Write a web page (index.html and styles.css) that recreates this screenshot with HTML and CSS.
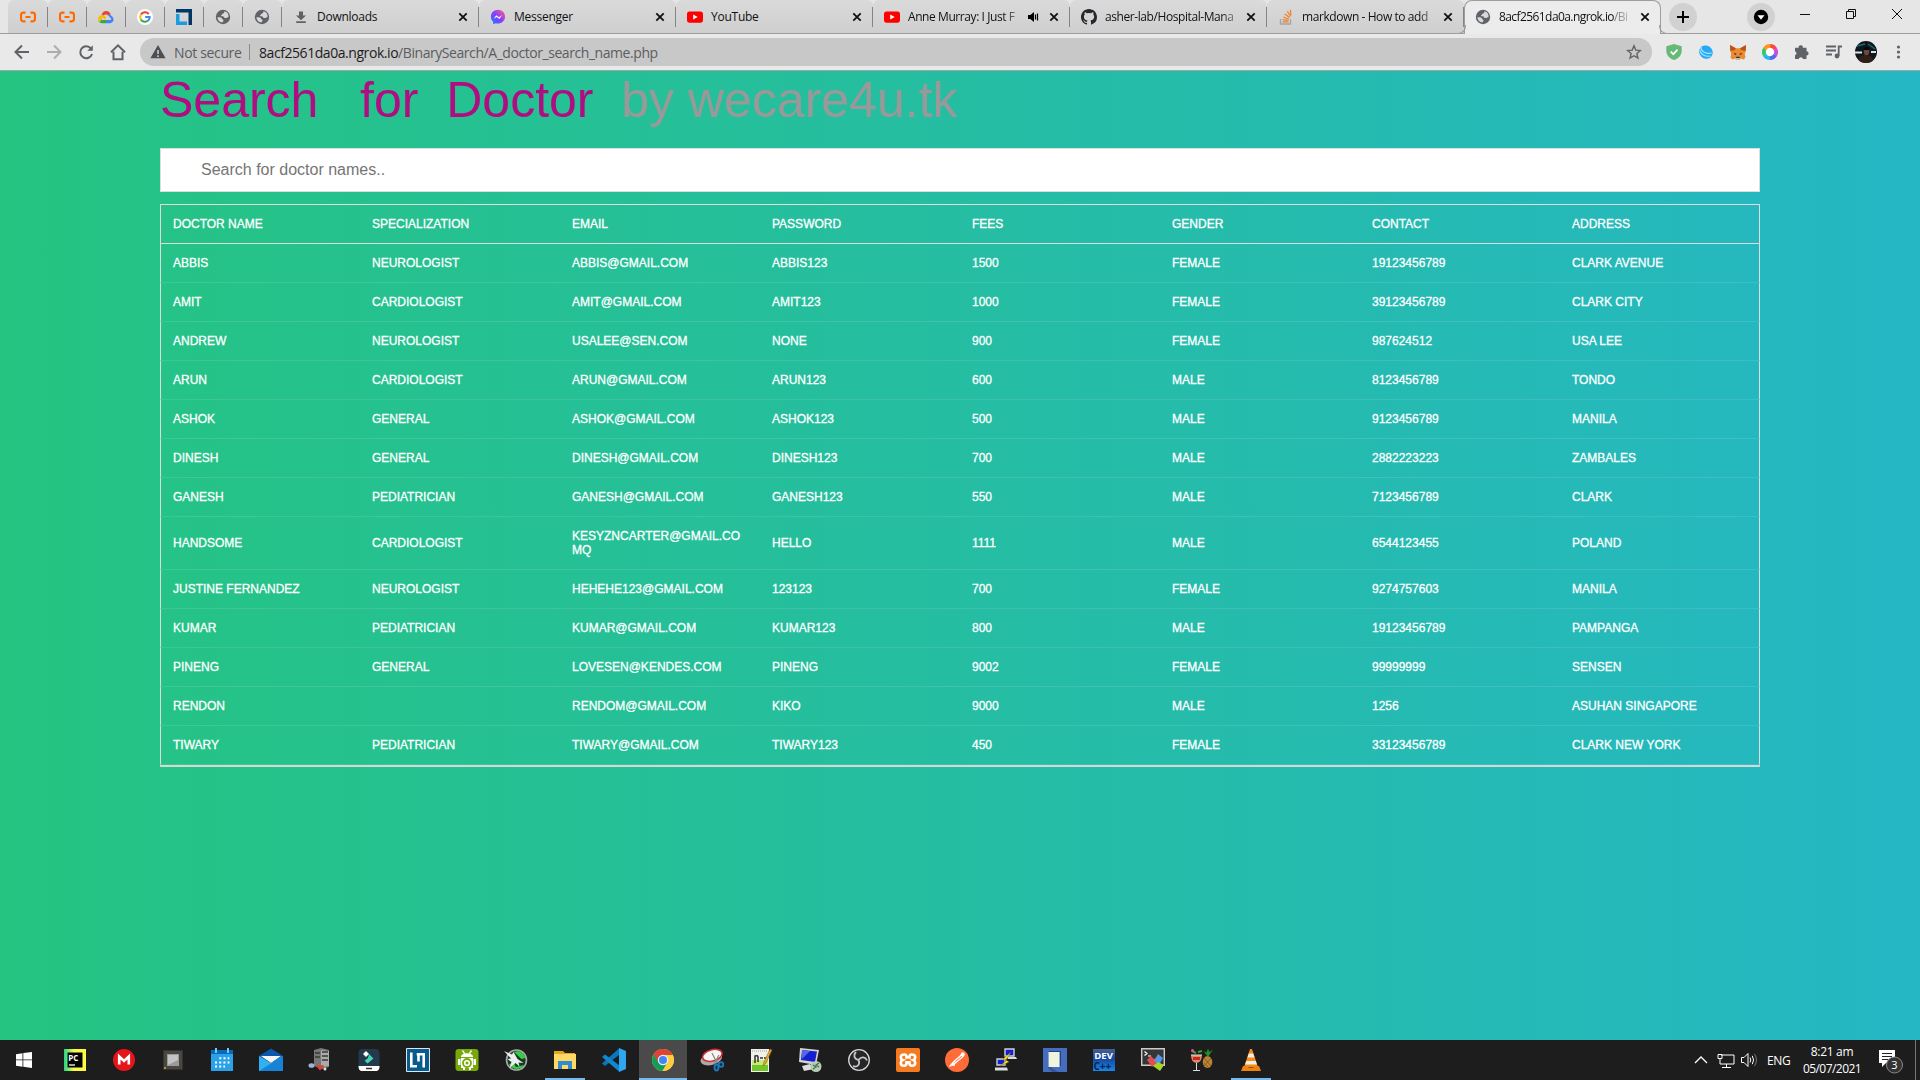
FILE: index.html
```html
<!DOCTYPE html>
<html lang="en">
<head>
<meta charset="utf-8">
<title>Search for Doctor</title>
<link rel="stylesheet" href="styles.css">
</head>
<body>
<svg class="defs" width="0" height="0">
  <symbol id="globe" viewBox="0 0 16 16"><circle cx="8" cy="8" r="7.200" fill="#5f6368"/><path d="M9.300 2.200c.3 1.400-.3 2-1.300 2.200-.9.200-.7 1.300-1.500 1.600-.8.300-.6 1.200.3 1.200 1.500-.1 2.500.5 2.600 1.800h1.800c1 0 1.300-.8 2.300-.7A5.600 5.600 0 0 0 9.300 2.200zM2.400 8.300c1.500-.4 4.300-.1 4.600 1.300.2 1.200 1.500.8 1.500 2 0 .9-.9 1-.9 2A5.700 5.700 0 0 1 2.400 8.300z" fill="#d8d8d8"/></symbol>
  <symbol id="close" viewBox="0 0 16 16"><path d="M4.300 4.300l7.400 7.400M11.700 4.300l-7.400 7.400" stroke="#111" stroke-width="1.800"/></symbol>
  <symbol id="cloud" viewBox="0 0 16 16"><path d="M5.500 3.700H3.300Q1 3.700 1 6v4Q1 12.300 3.300 12.300h2.200M10.500 3.700h2.200Q15 3.700 15 6v4q0 2.300-2.300 2.300h-2.200M5.500 8h5" fill="none" stroke="#ff6a00" stroke-width="2.200"/></symbol>
  <symbol id="tube" viewBox="0 0 16 16"><rect y="2.400" width="16" height="11.300" rx="2.600" fill="red"/><path d="M6.200 5.500v5L10.700 8z" fill="#fff"/></symbol>
</svg>

<header class="browser">
  <div class="tabs">
    <div class="tab pinned first"><svg class="fav"><use href="#cloud"/></svg></div>
    <div class="tab pinned"><svg class="fav"><use href="#cloud"/></svg></div>
    <div class="tab pinned"><svg class="fav" viewBox="0 0 16 16"><path d="M3.500 6.300C4.300 3.400 6 2 8 2c2.200 0 3.800 1.100 4.500 3L10.600 6.800C8.500 4.600 5.800 5.600 5.700 7z" fill="#ea4335"/><path d="M12.300 4.800c.2 1 .3 1.500 1.300 2.200C17 9.500 15.700 14.200 12 14.200H8v-3.100h4c1.500 0 1.600-2 .2-2.300L10.500 6.700z" fill="#4285f4"/><path d="M8 14.200H4.200c-2 0-3.200-1-3.700-2.500l2.600-1.400 1 .8H8z" fill="#34a853"/><path d="M1.800 13.200C-1.300 10.500.2 6 4.200 6c2 0 3.800 1.300 4 3.200L6.400 10.600C5.600 8.500 3 8.700 3.500 10.800z" fill="#fbbc05"/></svg></div>
    <div class="tab pinned"><svg class="fav" viewBox="0 0 16 16"><circle cx="8" cy="8" r="8" fill="#fff"/><path d="M11.700 5A4.800 4.800 0 0 0 3.900 5.600" fill="none" stroke="#ea4335" stroke-width="2"/><path d="M3.900 5.600a4.800 4.800 0 0 0 0 4.800" fill="none" stroke="#fbbc05" stroke-width="2"/><path d="M3.900 10.400a4.800 4.800 0 0 0 7.300 1.200" fill="none" stroke="#34a853" stroke-width="2"/><path d="M11.200 11.600A4.600 4.600 0 0 0 12.700 8H8.200" fill="none" stroke="#4285f4" stroke-width="2"/></svg></div>
    <div class="tab pinned"><svg class="fav" viewBox="0 0 16 16"><path d="M0 0h16v16h-3.500V3.500H0z" fill="#003764"/><path d="M0 5h3.500v7.500H11V16H0z" fill="#1b9be0"/></svg></div>
    <div class="tab pinned"><svg class="fav"><use href="#globe"/></svg></div>
    <div class="tab pinned"><svg class="fav"><use href="#globe"/></svg></div>
    <div class="tab"><svg class="fav" viewBox="0 0 16 16"><path d="M6 2.500h4v4h3L8 11.300 3 6.500h3zM3.200 12.300h9.600V14H3.200z" fill="#5f6368"/></svg><span class="title">Downloads</span><svg class="fav"><use href="#close"/></svg></div>
    <div class="tab"><svg class="fav" viewBox="0 0 16 16"><defs><linearGradient id="msg" x1="0" y1="1" x2="1" y2="0"><stop offset="0" stop-color="#08f"/><stop offset=".5" stop-color="#8a3cff"/><stop offset="1" stop-color="#ff6a70"/></linearGradient></defs><path d="M8 .8C3.800.8.900 3.800.900 7.700c0 2.200.9 3.900 2.300 5.100v2.500l2.400-1.100c5 1.200 9.500-1.900 9.500-6.500C15.100 3.700 12.200.8 8 .8z" fill="url(#msg)"/><path d="M3.700 9.800L6.300 6.300l2.600 2 3.200-2.200-2.700 3.800-2.600-2z" fill="#fff"/></svg><span class="title">Messenger</span><svg class="fav"><use href="#close"/></svg></div>
    <div class="tab"><svg class="fav"><use href="#tube"/></svg><span class="title">YouTube</span><svg class="fav"><use href="#close"/></svg></div>
    <div class="tab"><svg class="fav"><use href="#tube"/></svg><span class="title fade tight">Anne Murray: I Just F</span><svg class="sound" viewBox="0 0 16 16"><path d="M3 6h2.300L9 3v10L5.300 10H3z" fill="#000"/><path d="M10.500 5.500v5M12.500 4.500v7" stroke="#000" stroke-width="1.200"/></svg><svg class="fav"><use href="#close"/></svg></div>
    <div class="tab"><svg class="fav" viewBox="0 0 16 16"><path fill="#24292f" d="M8 0C3.580 0 0 3.580 0 8c0 3.540 2.290 6.530 5.470 7.590.4.070.55-.17.55-.38v-1.340c-2.230.48-2.700-1.070-2.700-1.070-.36-.93-.89-1.170-.89-1.170-.73-.5.050-.49.050-.49.810.060 1.230.83 1.230.83.710 1.230 1.880.87 2.330.66.070-.52.280-.87.510-1.070-1.780-.2-3.640-.89-3.640-3.950 0-.87.310-1.590.82-2.150-.08-.2-.36-1.020.080-2.120 0 0 .67-.22 2.200.82a7.600 7.600 0 0 1 4 0c1.530-1.040 2.200-.82 2.200-.82.440 1.100.160 1.920.080 2.120.510.56.820 1.270.820 2.150 0 3.070-1.870 3.750-3.650 3.950.290.250.54.73.54 1.480v2.200c0 .21.150.46.550.38A8 8 0 0 0 16 8c0-4.420-3.580-8-8-8z"/></svg><span class="title fade tight">asher-lab/Hospital-Mana</span><svg class="fav"><use href="#close"/></svg></div>
    <div class="tab"><svg class="fav" viewBox="0 0 16 16"><path d="M2.500 10v5h10v-5" fill="none" stroke="#9fa6ad" stroke-width="1.300"/><path d="M4.500 12.800h6M4.600 10.700l6 .6M5.200 8l5.700 2M6.700 5l5 3.600M9.300 2.300l3.500 5M12.300.8l.8 5" stroke="#f48024" stroke-width="1.200"/></svg><span class="title fade tight">markdown - How to add</span><svg class="fav"><use href="#close"/></svg></div>
    <div class="tab active"><svg class="fav"><use href="#globe"/></svg><span class="title fade tighter">8acf2561da0a.ngrok.io<i>/Bi</i></span><svg class="fav"><use href="#close"/></svg></div>
    <div class="round plus"><svg width="28" height="28"><path d="M8 14h12M14 8v12" stroke="#000" stroke-width="2"/></svg></div>
    <div class="round caret"><svg width="28" height="28"><circle cx="14" cy="14" r="7.200" fill="#000"/><path d="M10.500 12.200h7L14 16.800z" fill="#fff"/></svg></div>
    <svg class="window-buttons" width="136" height="28" viewBox="0 0 136 28"><path d="M15 14.500h10M61.500 11.500h7v7h-7zM63.500 11v-1.500h7v7H69M107 9l10 10M117 9l-10 10" fill="none" stroke="#111"/></svg>
  </div>

  <div class="toolbar">
    <svg class="nav" width="128" height="32" viewBox="0 0 128 32" fill="none" stroke="#5f6368" stroke-width="2"><path d="M29 16H16M22 9.500L15.500 16l6.500 6.500"/><path d="M47 16h13M54 9.500l6.500 6.500-6.500 6.500" stroke="#adadad"/><path d="M91 12.500a6 6 0 1 0 1 5.500"/><path d="M92.800 9.300v5.500h-5.500z" fill="#5f6368" stroke="none"/><path d="M113.500 15.800v7.500h9v-7.500M111 16.300L118 9.300l7 7"/></svg>
    <div class="address">
      <svg width="16" height="14" viewBox="0 0 16 14"><path d="M8 0l7.600 13.300H.4z" fill="#4b4e52"/><path d="M8 5v4M8 10.200V12" stroke="#ccc" stroke-width="1.600"/></svg>
      <span class="secure">Not secure</span><span class="bar"></span>
      <span class="url"><b>8acf2561da0a.ngrok.io</b>/BinarySearch/A_doctor_search_name.php</span>
      <svg class="star" width="16" height="16" viewBox="0 0 16 16"><path d="M8 1.800l1.800 4.300 4.600.4-3.500 3.100 1 4.500L8 11.700l-3.900 2.400 1-4.500L1.600 6.500l4.600-.4z" fill="none" stroke="#5f6368" stroke-width="1.400"/></svg>
    </div>
    <div class="extensions">
      <svg class="fav" viewBox="0 0 16 16"><path d="M8 0l7.700 2.200v4.500C15.700 11.500 12 14.500 8 16 4 14.500.3 11.500.3 6.700V2.200z" fill="#68b876"/><path d="M4.700 7.600l2.600 2.600 4.200-4.600" fill="none" stroke="#fff" stroke-width="1.700"/></svg>
      <svg class="fav" viewBox="0 0 16 16"><ellipse cx="8" cy="8.200" rx="7" ry="6.500" transform="rotate(35 8 8)" fill="#27a9f5"/><path d="M3 2.500c-1 3.500 3.500 8.300 10.800 6.500M1.800 6.500C3 11 7.500 13 12.500 12" fill="none" stroke="#a9e4ff" stroke-width="1.200"/></svg>
      <svg class="fav" viewBox="0 0 16 16"><path d="M0 1l5.800 3.300h4.400L16 1l-.3 6-1 3 .8 3-1.500 2.500-3.500-1-1.500 1.200H7l-1.500-1.200-3.500 1L.5 13l.8-3-1-3z" fill="#ed8a2d"/><path d="M0 1l5.800 3.300L5 6 .3 7zM16 1l-5.800 3.300L11 6l4.700 1z" fill="#b95319"/><path d="M3.800 8.700l3 1.200-1.700 1zM12.200 8.700l-3 1.200 1.700 1zM6.300 12.800h3.400l.3 1.700H6z" fill="#233447"/><path d="M4.800 15l1.500-1h3.400l1.500 1-1.700 1H6.500z" fill="#c9b7aa"/></svg>
      <svg class="fav" viewBox="0 0 16 16"><circle cx="8" cy="8" r="5.400" fill="#fff"/><g fill="none" stroke-width="3.800" stroke-dasharray="6.400 40" transform="rotate(-90 8 8)"><circle cx="8" cy="8" r="6.100" stroke="#f44"/><circle cx="8" cy="8" r="6.100" stroke="#d049d8" transform="rotate(60 8 8)"/><circle cx="8" cy="8" r="6.100" stroke="#5867ee" transform="rotate(120 8 8)"/><circle cx="8" cy="8" r="6.100" stroke="#23b8f1" transform="rotate(180 8 8)"/><circle cx="8" cy="8" r="6.100" stroke="#35c767" transform="rotate(240 8 8)"/><circle cx="8" cy="8" r="6.100" stroke="#ff981a" transform="rotate(300 8 8)"/></g></svg>
      <svg class="fav" viewBox="0 0 16 16"><path d="M1 3.800h3.700a2.100 2.100 0 1 1 4.100 0h3.700v3.500a2.100 2.100 0 1 1 0 4.200V15H9a2.200 2.200 0 0 0-4.300 0H1v-3.700a2.100 2.100 0 0 0 0-4z" fill="#5f6368"/></svg>
      <svg class="fav" viewBox="0 0 16 16"><path d="M0 2.500h10M0 6.500h10M0 10.500h6M12.700 12V2.500H16" fill="none" stroke="#5f6368" stroke-width="1.800"/><circle cx="11" cy="12" r="2.400" fill="#5f6368"/></svg>
      <svg class="avatar" width="22" height="22" viewBox="0 0 22 22"><defs><clipPath id="av"><circle cx="11" cy="11" r="11"/></clipPath></defs><g clip-path="url(#av)"><path d="M0 0h22v22H0z" fill="#10161b"/><path d="M2 5l8-2M13 3l7 5" stroke="#176b7e" stroke-width="1.500"/><path d="M0 10.500h7v2H0zM16 10h5v2h-5z" fill="#d4e3e5"/><path d="M3 22c0-6 3-8 8-8s8 3 8 8z" fill="#302018"/><ellipse cx="11.500" cy="10.500" rx="2.800" ry="3.800" fill="#68493c"/><path d="M8.500 9c0-4 6-4 6 0z" fill="#080808"/></g></svg>
      <svg class="fav" viewBox="0 0 16 16"><g fill="#5f6368"><circle cx="8.500" cy="3" r="1.600"/><circle cx="8.500" cy="8" r="1.600"/><circle cx="8.500" cy="13" r="1.600"/></g></svg>
    </div>
  </div>
</header>

<main class="page">
  <h1>Search   for  Doctor  <small>by wecare4u.tk</small></h1>
  <input class="search" type="text" placeholder="Search for doctor names..">
  <table class="doctors">
    <thead><tr><th>Doctor Name</th><th>Specialization</th><th>Email</th><th>Password</th><th>Fees</th><th>Gender</th><th>Contact</th><th>Address</th></tr></thead>
    <tbody>
      <tr><td>Abbis</td><td>Neurologist</td><td>abbis@gmail.com</td><td>abbis123</td><td>1500</td><td>Female</td><td>19123456789</td><td>Clark Avenue</td></tr>
      <tr><td>Amit</td><td>Cardiologist</td><td>amit@gmail.com</td><td>amit123</td><td>1000</td><td>Female</td><td>39123456789</td><td>Clark City</td></tr>
      <tr><td>Andrew</td><td>Neurologist</td><td>usalee@sen.com</td><td>none</td><td>900</td><td>Female</td><td>987624512</td><td>USA Lee</td></tr>
      <tr><td>Arun</td><td>Cardiologist</td><td>arun@gmail.com</td><td>arun123</td><td>600</td><td>Male</td><td>8123456789</td><td>Tondo</td></tr>
      <tr><td>Ashok</td><td>General</td><td>ashok@gmail.com</td><td>ashok123</td><td>500</td><td>Male</td><td>9123456789</td><td>Manila</td></tr>
      <tr><td>Dinesh</td><td>General</td><td>dinesh@gmail.com</td><td>dinesh123</td><td>700</td><td>Male</td><td>2882223223</td><td>Zambales</td></tr>
      <tr><td>Ganesh</td><td>Pediatrician</td><td>ganesh@gmail.com</td><td>ganesh123</td><td>550</td><td>Male</td><td>7123456789</td><td>Clark</td></tr>
      <tr><td>Handsome</td><td>Cardiologist</td><td>kesyzncarter@gmail.comq</td><td>hello</td><td>1111</td><td>Male</td><td>6544123455</td><td>Poland</td></tr>
      <tr><td>Justine Fernandez</td><td>Neurologist</td><td>hehehe123@gmail.com</td><td>123123</td><td>700</td><td>Female</td><td>9274757603</td><td>Manila</td></tr>
      <tr><td>Kumar</td><td>Pediatrician</td><td>kumar@gmail.com</td><td>kumar123</td><td>800</td><td>Male</td><td>19123456789</td><td>Pampanga</td></tr>
      <tr><td>Pineng</td><td>General</td><td>lovesen@kendes.com</td><td>pineng</td><td>9002</td><td>Female</td><td>99999999</td><td>Sensen</td></tr>
      <tr><td>Rendon</td><td></td><td>rendom@gmail.com</td><td>kiko</td><td>9000</td><td>Male</td><td>1256</td><td>Asuhan Singapore</td></tr>
      <tr><td>Tiwary</td><td>Pediatrician</td><td>tiwary@gmail.com</td><td>tiwary123</td><td>450</td><td>Female</td><td>33123456789</td><td>Clark New York</td></tr>
    </tbody>
  </table>
</main>

<footer class="taskbar">
  <div class="apps">
    <div class="app start"><svg viewBox="0 0 24 24"><path d="M4 6.200l6.500-1v6.300H4zM11.300 5L20 3.900v7.600h-8.700zM4 12.300h6.500v6.400L4 17.800zM11.300 12.300H20V20l-8.700-1.200z" fill="#fff"/></svg></div>
    <div class="app"><svg viewBox="0 0 24 24"><defs><linearGradient id="pc"><stop offset="0" stop-color="#21d789"/><stop offset=".45" stop-color="#fcf84a"/></linearGradient></defs><path d="M1 1h22v22H1z" fill="url(#pc)"/><path d="M4.500 4.500h15v15h-15z" fill="#000"/><path d="M6 17h6" stroke="#fff" stroke-width="1.300"/><text x="5.300" y="12.600" class="ic-pc">PC</text></svg></div>
    <div class="app"><svg viewBox="0 0 24 24"><circle cx="12" cy="12" r="11" fill="#e6151b"/><path d="M7.200 16.500v-8L12 13l4.800-4.500v8" fill="none" stroke="#fff" stroke-width="2.600"/></svg></div>
    <div class="app"><svg viewBox="0 0 24 24"><path d="M2 2h20v20H2z" fill="#35322e"/><path d="M3 3h18v18H3z" fill="#4a4742"/><path d="M6 6h12v12H6z" fill="#9a9a9a"/><path d="M7 7h10v5L7 17z" fill="#c3c3c3"/><path d="M3 19h2v2H3z" fill="#b78a38"/></svg></div>
    <div class="app"><svg viewBox="0 0 24 24"><path d="M1 2h22v21H1z" fill="#2ba1ea"/><path d="M1 2h22v4H1z" fill="#0b69b8"/><path d="M5 0h2v5H5zM17 0h2v5h-2z" fill="#6bcdf8"/><path d="M9.300 10.200h10M5 14.400h14.500M5 18.600h10" stroke="#fff" stroke-width="2" stroke-dasharray="2 2.200"/></svg></div>
    <div class="app"><svg viewBox="0 0 24 24"><path d="M0 8L12 .5 24 8v4H0z" fill="#0a57ad"/><path d="M2 8h20l-10 7z" fill="#f4f4f4"/><path d="M0 8l12 7 12-7v15H0z" fill="#32b1f1"/><path d="M0 23L24 8v15z" fill="#1683d8"/></svg></div>
    <div class="app"><svg viewBox="0 0 24 24"><path d="M6 2l7-2 8 2v17l-7 2-8-3z" fill="#777"/><path d="M13 2l8 1v15l-8 1z" fill="#aaa"/><path d="M14 4h6M14 8h6M14 12h6M7 5h5M7 9h5" stroke="#3a3a3a" stroke-width="1.500"/><ellipse cx="3.500" cy="17.500" rx="3" ry="2.300" fill="#9eb4d4"/><path d="M8 18q2-2 4 0 2-2 4 0l-4 4.500z" fill="#e33b35"/><circle cx="17" cy="21" r="1.500" fill="#ddd"/></svg></div>
    <div class="app"><svg viewBox="0 0 24 24"><rect x="1.500" y="1" width="21" height="22" rx="4" fill="#24394c"/><path d="M1.500 18h21c0 3-1 5-4 5h-13c-3 0-4-2-4-5z" fill="#fff"/><path d="M9 3l3 3-3 3-3-3z" fill="#fff"/><path d="M12 6l4.500 4.500-6 5L7.700 12.700 11 10z" fill="#3fd5b7"/><path d="M9 20.500h6" stroke="#333" stroke-width="1.500"/></svg></div>
    <div class="app"><svg viewBox="0 0 24 24"><path d="M.5.500h23v23H.5z" fill="#095b8f" stroke="#dbe9f2"/><path d="M5.300 4.500v13.700H11M10.700 6.200h7V19.500M12.500 6v7.500" fill="none" stroke="#fff" stroke-width="2.600"/></svg></div>
    <div class="app"><svg viewBox="0 0 24 24"><rect x=".5" y="1" width="23" height="22" rx="3" fill="#78a90b"/><path d="M6 9c0-5 12-5 12 0zM6 10h12v10H6zM3 11h2.500v6H3zM18.500 11H21v6h-2.500zM8 20h2v2H8zM14 20h2v2h-2zM7 3l1-1 2 3-1 1zM17 3l-1-1-2 3 1 1z" fill="#fff"/><circle cx="12" cy="15" r="4" fill="#fff" stroke="#78a90b" stroke-width="1.800"/><circle cx="12" cy="15" r="1.500" fill="#78a90b"/></svg></div>
    <div class="app"><svg viewBox="0 0 24 24"><circle cx="12.500" cy="12" r="10" fill="#173d21" stroke="#a8aba8" stroke-width="1.600"/><path d="M10 4c6-2 10 1 11.500 6l-4 1zM5 16l5-1 2 4 8-2c-3 5-11 6-15-1z" fill="#36cc48"/><path d="M0 3l8 3.500 1.500-2.500 4 7 6 4-5-.5 1 4-4-3.500-6 5 2-6-4-3 3.500-.5z" fill="#eee"/></svg></div>
    <div class="app open"><svg viewBox="0 0 24 24"><path d="M1 3h9l2 2h10v16H1z" fill="#e9a51a"/><path d="M1 6h22v15H1z" fill="#ffd867"/><path d="M5 13h14v8h-4v-4H9v4H5z" fill="#2f8ed0"/></svg></div>
    <div class="app"><svg viewBox="0 0 24 24"><path d="M17.500 0v6.500L3 18 0 15.500z" fill="#0877bb"/><path d="M17.500 24v-6.500L3 6.500 0 9z" fill="#1286cf"/><path d="M17 0l7 3v18l-7 3z" fill="#30a6ee"/></svg></div>
    <div class="app open current"><svg viewBox="0 0 24 24"><circle cx="12" cy="12" r="11" fill="#ffcd40"/><path d="M2.500 6.500A11 11 0 0 1 21.800 7H12L7 15z" fill="#db4437"/><path d="M2.500 6.500A11 11 0 0 0 11.500 23l5-8.500-9 0z" fill="#0f9d58"/><path d="M12 7h9.800A11 11 0 0 1 11.500 23l5-8.500z" fill="#ffcd40"/><circle cx="12" cy="12" r="5.200" fill="#f1f1f1"/><circle cx="12" cy="12" r="4" fill="#4285f4"/></svg></div>
    <div class="app"><svg viewBox="0 0 24 24"><ellipse cx="11" cy="11" rx="11" ry="6" transform="rotate(-15 11 10)" fill="#aaa"/><ellipse cx="12.500" cy="7.500" rx="10" ry="5.600" transform="rotate(-15 12 8)" fill="#f5f5f5" stroke="#d42d35" stroke-width="1.500"/><path d="M12 5l5 10M19 7l-5 9" stroke="#888" stroke-width="1.200"/><g fill="none" stroke="#1b78bd" stroke-width="2"><circle cx="21" cy="16.500" r="2.300"/><ellipse cx="16.500" cy="19.500" rx="1.900" ry="3"/></g></svg></div>
    <div class="app"><svg viewBox="0 0 24 24"><path d="M2 1h18v23H2z" fill="#f1f1ec"/><path d="M3 12h16v11H3z" fill="#72c629"/><path d="M3 12h16v5H3z" fill="#c6e979"/><path d="M3 3h16" stroke="#999" stroke-dasharray="1 1"/><path d="M6 15V8q3-1 3 1v5M11 10h3M15 10h3" fill="none" stroke="#333" stroke-width="1.500"/><path d="M21 1l2 1-6 13-3 3 1-4z" fill="#e9a731" stroke="#7a5119" stroke-width=".5"/></svg></div>
    <div class="app"><svg viewBox="0 0 24 24"><path d="M2 0l19 2-3 15-17-3z" fill="#d4d4cf"/><path d="M4 2l15 1.500L17 14 3 12z" fill="#1420cf"/><path d="M4 2l8 1-8 8z" fill="#5867e9"/><path d="M4 18l8-2 4 5-10 2z" fill="#ddd"/><circle cx="18" cy="18.500" r="5.500" fill="#bcc9b8"/><path d="M15 17l3 2-3 2M21 15l-3 2 3 2" fill="none" stroke="#287a3b" stroke-width="1.200"/></svg></div>
    <div class="app"><svg viewBox="0 0 24 24"><circle cx="12" cy="12" r="10.300" fill="#26252a" stroke="#d5d5d5" stroke-width="1.300"/><path d="M11.500 12C7 11 6 7 9 4M11.500 12c3-4 7-3 8.500.5M11.500 12c2 4-1 8-5.500 6" fill="none" stroke="#c5c5c5" stroke-width="1.800"/></svg></div>
    <div class="app"><svg viewBox="0 0 24 24"><rect width="24" height="24" rx="2" fill="#f47b20"/><path d="M8.500 6.500Q4.500 6.500 4.800 9.500q.2 2 1.800 2.500-1.800.7-1.800 3 0 2.800 3.200 2.800 2.500 0 2.500-2.500v-1h3v1q0 2.500 2.500 2.500 3.200 0 3.200-2.800 0-2.300-1.800-3 1.600-.5 1.800-2.500.3-3-3.700-3-2 0-2 2.300v.7h-3v-.7q0-2.300-2-2.300z" fill="none" stroke="#fff" stroke-width="2.600"/></svg></div>
    <div class="app"><svg viewBox="0 0 24 24"><circle cx="12" cy="12" r="12" fill="#ff6c37"/><path d="M4.500 18.500l5-5.500 7-6 1.500 1.500-7 6zM9.500 13l2 2M6 17h4" fill="none" stroke="#fff" stroke-width="1.300"/><circle cx="17.800" cy="6.300" r="2" fill="#fff"/></svg></div>
    <div class="app"><svg viewBox="0 0 24 24"><path d="M11 1h9v7h-9zM3 11h8v6H3z" fill="#1420d7" stroke="#d1d1d1" stroke-width="1.400"/><path d="M13 9h9l1 2h-9zM1 19.500h12l1 3H1z" fill="#ddd"/><path d="M17 4l-8 7 4 1-7 6 9-4-3-2z" fill="#ffe81a" stroke="#705900" stroke-width=".4"/></svg></div>
    <div class="app"><svg viewBox="0 0 24 24"><path d="M0 0h24v24H0z" fill="#456dbf"/><path d="M5 20V4l4 16 6 4H9z" fill="#355698"/><path d="M5.500 4h11v15h-11z" fill="#eff5dc"/><path d="M6 3.500h11.500V18" fill="none" stroke="#23417f"/></svg></div>
    <div class="app"><svg viewBox="0 0 24 24"><defs><linearGradient id="dv" x2="0" y2="1"><stop offset="0" stop-color="#465f90"/><stop offset=".45" stop-color="#1848a0"/><stop offset="1" stop-color="#1589e5"/></linearGradient></defs><path d="M1 1h22v22H1z" fill="url(#dv)"/><text x="2.300" y="11" class="ic-dev">DEV</text><text x="1.500" y="21.500" class="ic-cpp">C++</text></svg></div>
    <div class="app"><svg viewBox="0 0 24 24"><path d="M.7.700h22.600v16.600H.7z" fill="#343637" stroke="#ccc" stroke-width="1.400"/><path d="M3.500 3.500L6 5.500 3.500 7.500M7 8h3" fill="none" stroke="#fff" stroke-width="1.200"/><path d="M6 12l4-4 3 3 2-1 3 3-7 6z" fill="#e94a4c"/><path d="M17 6l5 4-4 7-5-4z" fill="#5797e8"/><path d="M12 18l5-4 6 3-4 6z" fill="#a4d529"/></svg></div>
    <div class="app"><svg viewBox="0 0 24 24"><path d="M1 7h11q0 7-5.500 8Q1 14 1 7z" fill="#da8a66"/><path d="M3 9h7v3H3z" fill="#cf2323"/><path d="M1 7h11M6.500 15v7M3 22.500h7" stroke="#ddd"/><path d="M2 3l4 2M8 4l4-1" stroke="#36a52b" stroke-width="2"/><circle cx="2.500" cy="2.500" r="1.500" fill="#e04fb1"/><ellipse cx="17.500" cy="14" rx="4.800" ry="6" fill="#bd8332"/><path d="M14 10l7 8M14 15l4 4M21 10l-7 8" stroke="#70501e" stroke-width=".7"/><path d="M18 9L13.500 3l3 1.500 1.500-4 1.500 3.500L23 1.500z" fill="#238e2a"/></svg></div>
    <div class="app open"><svg viewBox="0 0 24 24"><path d="M11 1h2l6 18H5z" fill="#f68b12"/><path d="M9.800 5.500h4.400l1.300 4h-7zM7.300 13h9.400l1.200 3.500H6.100z" fill="#eee"/><path d="M4 18h3c3 2 7 2 10 0h3l2 5H2z" fill="#ef8310"/></svg></div>
  </div>
  <div class="tray">
    <svg width="74" height="24" viewBox="0 0 74 24" fill="none" stroke="#fff"><path d="M4 15l6-6 6 6" stroke-width="1.300"/><path d="M30 7h13v9H29v-6M27 6.500h4v4h-4zM35.500 16v3M31 19.500h9"/><path d="M50.500 9.500h2.500l4-4v13l-4-4h-2.500zM59 9.500q1.500 2.500 0 5M61.300 7.800q2.500 4.200 0 8.400"/><path d="M63.500 6q4 6 0 12" stroke="#777"/></svg>
    <span class="lang">ENG</span>
    <div class="clock"><span>8:21 am</span><span class="date">05/07/2021</span></div>
    <svg class="notes" width="28" height="28" viewBox="0 0 28 28"><path d="M2 4h16v13H9l-4 4v-4H2z" fill="#fff"/><path d="M5 7.500h10M5 10.500h10M5 13.500h6" stroke="#222"/><circle cx="17.500" cy="19" r="8" fill="#333" stroke="#888"/><text x="17.500" y="22.800" class="badge">3</text></svg>
    <span class="desktop"></span>
  </div>
</footer>
</body>
</html>
```

FILE: styles.css
```css
* { box-sizing: border-box; }
body {
  margin: 0;
  width: 1920px;
  height: 1080px;
  overflow: hidden;
  display: flex;
  flex-direction: column;
  font-family: "Open Sans", "Noto Sans", sans-serif;
}
.defs { display: none; }
svg { display: block; flex: none; }
.fav { width: 16px; height: 16px; }

/* Browser window */
.browser { height: 71px; flex: none; background: #e9e9e9; border-bottom: 1px solid #a2a2a2; }
.tabs {
  display: flex;
  height: 34px;
  padding-left: 8px;
  background: linear-gradient(#9d9d9d, #9d9d9d) bottom / 100% 1px no-repeat, #e6e6e6;
}
.tab {
  display: flex;
  align-items: center;
  width: 197px;
  height: 33px;
  flex: none;
  padding: 1px 8px 0 11px;
  border-radius: 6px 6px 0 0;
  background: linear-gradient(#858585, #858585) right 7px / 1px 20px no-repeat, linear-gradient(#dadada, #cfcfcf);
}
.tab.pinned { width: 39px; padding: 1px 1px 0 0; justify-content: center; }
.tab.first { width: 40px; }
.tab.active {
  position: relative;
  height: 34px;
  padding: 0 7px 1px 10px;
  border: 1px solid #9d9d9d;
  border-width: 1px 1px 0;
  border-radius: 8px 8px 0 0;
  background: #ececec;
}
.tab.active::before, .tab.active::after {
  content: "";
  position: absolute;
  bottom: 0;
  width: 8px;
  height: 8px;
  border-bottom: 1px solid #9d9d9d;
}
.tab.active::before { left: -8px; border-right: 1px solid #9d9d9d; border-bottom-right-radius: 8px; }
.tab.active::after { right: -8px; border-left: 1px solid #9d9d9d; border-bottom-left-radius: 8px; }
.title {
  flex: 1;
  margin-left: 8px;
  white-space: nowrap;
  font-size: 12px;
  line-height: 18px;
  letter-spacing: -.25px;
  color: #111;
}
.title.tight { letter-spacing: -.42px; }
.title.tighter { letter-spacing: -.58px; }
.title i { font-style: normal; color: #777; }
.fade { mask-image: linear-gradient(to right, #000 calc(100% - 20px), rgba(0, 0, 0, .15)); margin-right: 2px; }
.sound { width: 16px; height: 16px; margin: 0 5px 0 0; }
.round { width: 28px; height: 28px; margin-top: 3px; border-radius: 50%; background: #d1d1d1; flex: none; }
.plus { margin-left: 8px; }
.caret { margin-left: 50px; }
.window-buttons { margin-left: 10px; }

.toolbar { display: flex; align-items: center; height: 36px; }
.nav { margin-right: 12px; }
.address {
  display: flex;
  align-items: center;
  width: 1512px;
  height: 28px;
  padding: 0 10px;
  border-radius: 14px;
  background: #c8c8c8;
  font-size: 14px;
  color: #5a5d61;
}
.secure { margin-left: 8px; width: 75px; letter-spacing: -.35px; white-space: nowrap; }
.bar { width: 1px; height: 16px; background: #8b8b8b; }
.url { margin-left: 9px; letter-spacing: -.44px; white-space: nowrap; }
.url b { font-weight: normal; color: #1c1c1c; }
.star { margin-left: auto; }
.extensions { display: flex; align-items: center; gap: 16px; margin-left: 14px; }
.avatar { margin: 0 -3px; }

/* Doctor directory */
.page {
  height: 969px;
  padding: 0 160px;
  background: linear-gradient(to right, #25c481, #25b7c4);
  font-family: Arial, "Liberation Sans", sans-serif;
}
h1 { margin: 0; height: 77px; font-size: 50px; font-weight: 400; line-height: 59px; color: #b10d82; white-space: pre; }
h1 small { font-size: inherit; color: #999; }
.search {
  display: block;
  width: 1600px;
  height: 44px;
  margin: 0 0 12px;
  padding: 0 20px 1px 40px;
  border: 1px solid #ddd;
  border-radius: 0;
  background: #fff;
  font: 16px Arial, "Liberation Sans", sans-serif;
}
.search::placeholder { color: #757575; opacity: 1; }
.doctors {
  width: 1600px;
  table-layout: fixed;
  border-collapse: separate;
  border-spacing: 0;
  border-top: 1px solid #ddd;
  border-bottom: 2px solid #d3d9d7;
  font-size: 12px;
  line-height: 14px;
  color: #fff;
  text-transform: uppercase;
  -webkit-text-stroke: .3px #fff;
}
.doctors th, .doctors td {
  padding: 12px;
  border-bottom: 1px solid rgba(255, 255, 255, .1);
  font-weight: 400;
  text-align: left;
  vertical-align: middle;
  overflow-wrap: anywhere;
}
.doctors th { border-bottom-color: #ddd; }
.doctors th:first-child, .doctors td:first-child { border-left: 1px solid #ddd; }
.doctors th:last-child, .doctors td:last-child { border-right: 1px solid #ddd; }

/* Taskbar */
.taskbar { display: flex; justify-content: space-between; height: 40px; background: #1d1d1d; color: #fff; }
.apps { display: flex; gap: 1px; }
.app { display: flex; align-items: center; justify-content: center; width: 48px; height: 40px; }
.app svg { width: 24px; height: 24px; }
.start { width: 50px; padding-right: 2px; }
.open { background: linear-gradient(#76b9ed, #76b9ed) bottom / 40px 2px no-repeat; }
.current { background: linear-gradient(#76b9ed, #76b9ed) bottom / 48px 2px no-repeat, #4a4a4a; }
.ic-pc { font: bold 8px "Open Sans", sans-serif; fill: #fff; }
.ic-dev { font: bold 9.500px "Open Sans", sans-serif; fill: #fff; }
.ic-cpp { font: bold 10px "Open Sans", sans-serif; fill: #082452; }
.tray { display: flex; align-items: center; font-size: 12px; }
.lang { width: 24px; margin-left: 2px; letter-spacing: -.3px; }
.clock { display: flex; flex-direction: column; align-items: center; width: 60px; margin-left: 11px; line-height: 17px; letter-spacing: -.3px; white-space: nowrap; }
.date { letter-spacing: -.55px; }
.notes { margin-left: 15px; }
.badge { font: 11px "Open Sans", sans-serif; fill: #fff; text-anchor: middle; }
.desktop { width: 1px; height: 40px; margin: 0 4px 0 10px; background: #777; }
```
